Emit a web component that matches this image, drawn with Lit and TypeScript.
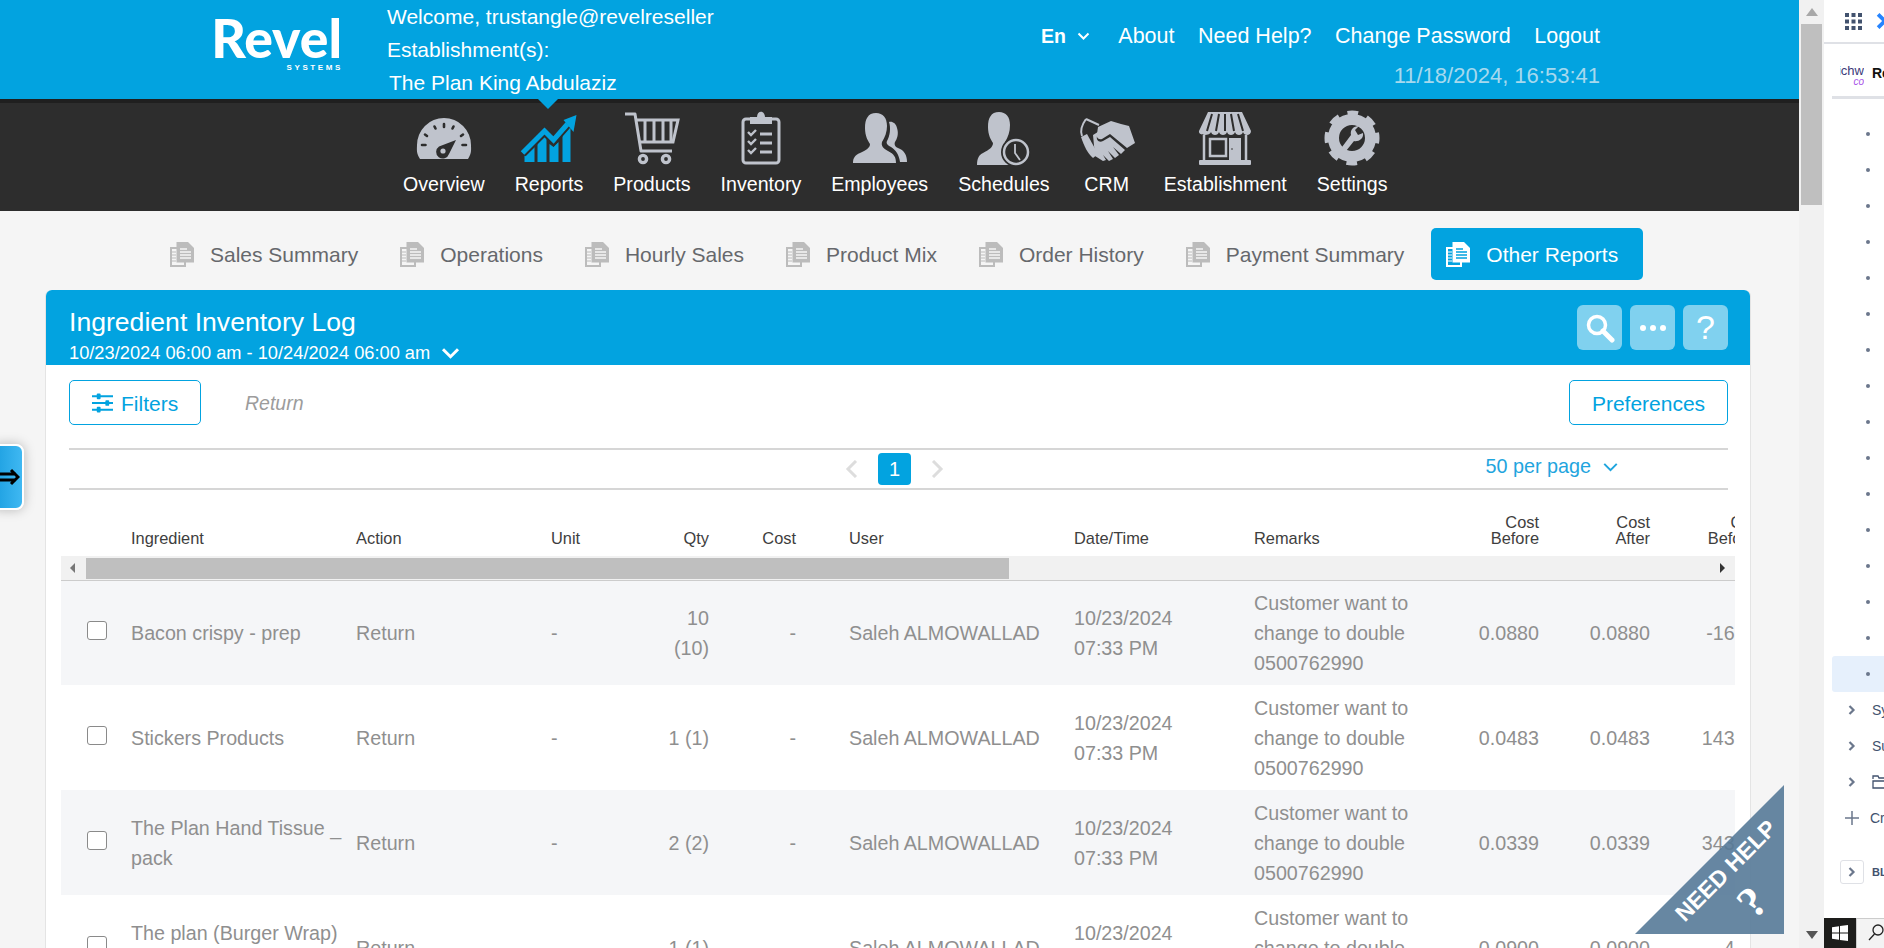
import { LitElement, html, css, svg } from "lit";
import { customElement } from "lit/decorators.js";

const navIcons: Record<string, unknown> = {
  overview: svg`<path class="g" d="M6 49C2 43 3 39 3 35A27 27 0 0 1 57 35C57 39 58 43 54 49Z"/>
    <path class="d" stroke-width="2.6" stroke-linecap="round" d="M11 24.500l2 1.500M20.500 16.500l1 2M30 14v3M39.500 16.500l-1 2M49 24.500l-2 1.500M8 35h3.500M48.500 35H52"/>
    <path class="df" d="M42 30L25 36.500A6.600 6.600 0 1 0 35 44Z"/><circle class="g" cx="29" cy="41" r="2.600"/>`,
  reports: svg`<g transform="translate(1.500 0)"><g class="b"><path d="M4 52V46L14 37V52Z"/><path d="M17 52V33L26 24V52Z"/><path d="M29 52V34L33 37L38 32V52Z"/><path d="M42 52V24L50 16V52Z"/></g>
    <path fill="none" stroke="#2d2d2d" stroke-width="9" d="M2 43L24 21L33 30L47 14"/>
    <path fill="none" stroke="#02a3e0" stroke-width="5" d="M2 43L24 21L33 30L47 14"/>
    <path class="b" d="M56 5L43 10L53 22Z"/></g>`,
  products: svg`<g class="o" stroke-width="3"><path d="M3 4H13L19 41H50" stroke-linejoin="round"/><path d="M14 10H56L51 32H18"/><path d="M23 11V31M32 11V31M41 11V31M49 11V31" stroke-width="3"/></g>
    <circle class="o" stroke-width="3.400" cx="21" cy="49" r="3.600"/><circle class="o" stroke-width="3.400" cx="44" cy="49" r="3.600"/>`,
  inventory: svg`<rect class="o" stroke-width="3" x="12" y="9" width="36" height="44" rx="3"/>
    <path class="g" d="M19 7H26C26 0 34 0 34 7H41V14H19Z"/>
    <g class="o" stroke-width="2.400"><path d="M17 22l3 3 5-5M17 31l3 3 5-5M17 40l3 3 5-5"/><path stroke-width="3" d="M29 24H41M29 33H41M29 42H41"/></g>`,
  employees: svg`<path class="g" d="M39 12C42 11 46 13 47 18C49 24 47 29 45 32C44 34 45 37 48 38C54 40 57 45 57 52L50 52C49 45 46 40 41 37C37 35 36 33 37 31C40 26 41 18 39 12Z"/>
    <path class="g" d="M26 3C18 3 15 9 15 18C15 26 18 31 20 34C20 38 16 40 10 43C5 45 3 48 3 53L46 53C46 47 44 44 38 41C33 38 31 36 32 32C35 27 37 22 37 16C37 8 33 3 26 3Z"/>`,
  schedules: svg`<path class="g" d="M25 2C17 2 14 8 14 17C14 25 17 30 19 33C19 37 15 40 9 43C5 45 3 48 3 55L44 55C44 47 43 44 37 41C32 38 30 36 31 32C34 27 36 22 36 15C36 7 32 2 25 2Z"/>
    <circle class="df" cx="42" cy="42" r="15"/><circle class="o" stroke-width="2.500" cx="42" cy="42" r="12"/>
    <path class="o" stroke-width="1.800" d="M41 34V43L46 50"/>`,
  crm: svg`<g class="g"><path d="M21 17L34 11L44 14L52 16L58 33L50 38L33 24L25 29C21 30 19 27 20 24Z"/><path d="M16 25L24 20L20 26C19 30 22 33 26 31L33 27L48 40L44 44L36 37L42 45L38 48L31 41L36 49L32 51L26 45L29 50L26 51L18 46Z"/><path d="M4 27L10 24L21 44L16 48C11 44 7 36 4 27Z"/></g>
    <path class="o" stroke-width="2" d="M9 9C4 16 3 21 5 26M9 9L22 15"/>`,
  establishment: svg`<path class="g" d="M13 2H47L56 21C56 26 49 26 48 22C47 26 41 26 40 22C39 26 33 26 32 22C31 26 25 26 24 22C23 26 17 26 16 22C15 26 3 26 4 21Z"/>
    <path class="dl" stroke-width="2" d="M17 4L12 21M24 4L21 21M30 4V21M36 4L39 21M43 4L48 21"/>
    <path class="o" stroke-width="2.500" d="M9 25V50M51 25V50"/>
    <rect class="o" stroke-width="2.500" x="15" y="29" width="16" height="17"/><rect class="g" x="34" y="28" width="12" height="22"/><circle class="df" cx="37" cy="39" r=".8"/>
    <rect class="g" x="4" y="50" width="52" height="5" rx="1"/>`,
  settings: svg`<circle class="o" stroke-width="5" stroke-dasharray="10.500 9.140" cx="30" cy="28" r="25" transform="rotate(-12 30 28)"/>
    <circle class="o" stroke-width="11" cx="30" cy="28" r="18.500"/>
    <path class="g" d="M20 37L29 25C28 20 31 16 37 16L33 20L36 25L41 23C42 29 36 32 32 31L24 41C22 42 19 40 20 37Z"/>`,
};

const nav = [
  ["Overview", "overview"], ["Reports", "reports"], ["Products", "products"], ["Inventory", "inventory"],
  ["Employees", "employees"], ["Schedules", "schedules"], ["CRM", "crm"], ["Establishment", "establishment"], ["Settings", "settings"],
];
const tabs = ["Sales Summary", "Operations", "Hourly Sales", "Product Mix", "Order History", "Payment Summary"];
const rows = [
  ["Bacon crispy - prep", "10 (10)", "0.0880", "0.0880", "-16.00"],
  ["Stickers Products", "1 (1)", "0.0483", "0.0483", "143.00"],
  ["The Plan Hand Tissue _ pack", "2 (2)", "0.0339", "0.0339", "343.00"],
  ["The plan (Burger Wrap) pack", "1 (1)", "0.0900", "0.0900", "4.00"],
];

const docIcon = html`<svg class="doc" viewBox="0 0 24 25" width="24" height="25" fill="none" stroke="currentColor">
  <path d="M7 6H1V24H15V20" stroke-width="2"/><path d="M2 10H6M2 13H6M2 16H6M2 19H6" stroke-width="1.200"/>
  <path d="M6.500 0H18L24 6V20.500H6.500Z" fill="currentColor" stroke="none"/>
  <path d="M10 7H17M10 10H21M10 13H21M10 16H21" stroke="var(--doc-line)" stroke-width="1.300"/></svg>`;

@customElement("app-root")
export class AppRoot extends LitElement {
  static styles = css`
    :host { display: block; position: relative; width: 1884px; height: 948px; overflow: hidden; font-family: "Liberation Sans", Arial, sans-serif; }
    .shell { display: flex; height: 948px; }
    .page { width: 1799px; flex: none; background: #f5f5f5; overflow: hidden; }

    .top { display: flex; height: 99px; background: #02a3e0; color: #fff; padding: 0 199px 0 214px; box-sizing: border-box; }
    .logo { width: 127px; display: flex; flex-direction: column; align-items: flex-end; padding-top: 15px; }
    .logo b { font: 900 53.500px/44px Lato, sans-serif; margin-right: -1px; }
    .logo span { font: 700 8px/10px "Liberation Sans", sans-serif; letter-spacing: 2.6px; margin-top: 4px; margin-right: -2px; }
    .who { margin-left: 46px; font-size: 21px; line-height: 33px; }
    .who .est { padding-left: 2px; }
    .meta { margin-left: auto; display: flex; flex-direction: column; align-items: flex-end; }
    .links { display: flex; align-items: center; gap: 23.500px; font-size: 21.500px; line-height: 26px; margin-top: 23px; }
    .lang { display: flex; align-items: center; gap: 11px; font-weight: 700; font-size: 19.500px; margin-right: 5px; }
    .clock { color: #a6d9ee; font-size: 22px; line-height: 26px; margin-top: 14px; }

    .nav { position: relative; height: 112px; box-sizing: border-box; background: #2d2d2d; border-top: 4px solid #1f1f1f; padding: 7px 0 0 403px; display: flex; gap: 30px; color: #fff; }
    .nav::before { content: ""; position: absolute; left: 538px; top: -4px; border: 10px solid transparent; border-top-color: #02a3e0; border-bottom-width: 0; }
    .item { display: flex; flex-direction: column; align-items: center; font-size: 19.600px; line-height: 24px; }
    .item svg { width: 60px; height: 56px; margin: 0 -3px 6px; }
    .g { fill: #bfc3cc; }
    .df { fill: #2d2d2d; }
    .b { fill: #02a3e0; }
    .o { fill: none; stroke: #bfc3cc; }
    .d { fill: none; stroke: #2d2d2d; }
    .dl { fill: none; stroke: #2d2d2d; }

    .tabs { display: flex; align-items: center; height: 79px; padding: 17px 0 10px 149px; box-sizing: border-box; color: #66686c; font-size: 21px; }
    .tab { display: flex; align-items: center; gap: 16px; height: 52px; padding: 0 21px; color: #66686c; --doc-line: #f5f5f5; }
    .tab span { padding-top: 1px; }
    .tab .doc { color: #bcbcbc; }
    .tab.on { margin-left: 6px; padding: 0 25px 0 15px; gap: 16px; background: #02a3e0; color: #fff; border-radius: 5px; --doc-line: #02a3e0; }
    .tab.on .doc { color: #fff; }

    .card { margin-left: 45px; width: 1706px; background: #fff; border: 1px solid #e4e4e4; border-width: 0 1px; border-radius: 6px 6px 0 0; box-sizing: border-box; }
    .ch { height: 75px; background: #02a3e0; color: #fff; border-radius: 6px 6px 0 0; padding: 0 22px 0 23px; display: flex; justify-content: space-between; }
    .title { font-size: 26.600px; line-height: 30px; margin-top: 17px; }
    .range { display: flex; align-items: center; gap: 11px; font-size: 18.250px; line-height: 20px; margin-top: 6px; }
    .acts { display: flex; gap: 8px; margin-top: 15px; }
    .act { width: 45px; height: 45px; border-radius: 6px; background: #80d1ef; display: flex; align-items: center; justify-content: center; font-size: 34px; }

    .tools { display: flex; align-items: center; padding: 15px 22px 0 23px; }
    .btn { height: 45px; box-sizing: border-box; border: 1px solid #02a3e0; border-radius: 5px; color: #02a3e0; display: flex; align-items: center; font-size: 21px; background: #fff; padding-top: 2px; }
    .btn svg { margin-top: -2px; }
    .btn.f { width: 132px; padding-left: 22px; gap: 8px; }
    .btn.p { width: 159px; justify-content: center; margin-left: auto; }
    .ret { margin-left: 44px; color: #9c9c9c; font-style: italic; font-size: 19.500px; padding-top: 1px; }

    .pager { position: relative; margin: 23px 22px 0 23px; height: 42px; box-sizing: border-box; border: solid #d6d6d6; border-width: 2px 0; display: flex; align-items: center; padding-left: 776px; gap: 20px; }
    .pg { width: 33px; height: 32px; background: #02a3e0; color: #fff; border-radius: 4px; font-size: 20px; display: flex; align-items: center; justify-content: center; }
    .per { margin-left: auto; margin-right: 110px; display: flex; align-items: center; gap: 12px; color: #1fa5de; font-size: 19.800px; padding-bottom: 5px; }

    .scroll { margin: 24px 15px 0; width: 1674px; overflow: hidden; }
    .row { display: grid; grid-template-columns: 70px 225px 195px 108px 50px 140px 225px 180px 166px 119px 111px 112px; width: 1701px; align-items: center; }
    .row > div { min-width: 0; }
    .r { text-align: right; }
    .costc { padding-right: 53px; }
    .head { align-items: end; color: #3e3e3e; font-size: 16.400px; line-height: 16px; padding-bottom: 10px; }
    .head > .last { padding-right: 6px; }
    .hb { height: 25px; box-sizing: border-box; background: #f1f1f1; border-bottom: 1px solid #ccc; display: flex; align-items: center; position: relative; z-index: 1; padding-left: 25px; padding-right: 10px; }
    .thumb { width: 923px; height: 21px; background: #bfbfbf; }
    .al { position: absolute; left: 9px; top: 7px; border: 5px solid transparent; border-right: 5px solid #777; border-left-width: 0; }
    .ar { margin-left: auto; border: 5px solid transparent; border-left: 5px solid #333; border-right-width: 0; }
    .body { margin-top: -1px; }
    .data { height: 105px; color: #8f8f8f; font-size: 19.700px; line-height: 30px; }
    .body > .data:nth-child(odd) { background: #f5f6f8; }
    .ing { padding-right: 8px; }
    .check { width: 20px; height: 19px; border: 1.500px solid #8a8a8a; border-radius: 3px; box-sizing: border-box; margin: 0 0 5px 26px; background: #fff; }

    .vbar { width: 25px; flex: none; background: #f1f1f1; position: relative; display: flex; flex-direction: column; align-items: center; }
    .up { margin-top: 8px; border: 8px solid transparent; border-bottom-color: #a8a8a8; border-top-width: 0; border-left-width: 6px; border-right-width: 6px; }
    .vthumb { width: 21px; height: 181px; background: #bfbfbf; margin-top: 8px; }
    .dn { margin-top: auto; margin-bottom: 9px; border: 8px solid transparent; border-top-color: #555; border-bottom-width: 0; border-left-width: 6px; border-right-width: 6px; }

    .side { flex: 1; min-width: 0; background: #fff; display: flex; flex-direction: column; overflow: hidden; color: #42526e; font-size: 14px; }
    .bar { height: 44px; flex: none; box-sizing: border-box; border-bottom: 2px solid #dfe1e6; display: flex; align-items: center; padding: 0 0 0 21px; gap: 14px; }
    .bar svg { flex: none; }
    .brand { height: 55px; flex: none; box-sizing: border-box; margin-left: 8px; border-bottom: 3px solid #dfe1e6; display: flex; align-items: center; padding-left: 8px; gap: 8px; }
    .mark { flex: none; display: flex; flex-direction: column; align-items: flex-end; width: 24px; overflow: hidden; color: #3b3a78; font-size: 13px; line-height: 13px; padding-top: 10px; }
    .mark i { color: #a855e8; font-size: 10px; line-height: 10px; }
    .brand b { color: #111; font-size: 14px; padding-top: 6px; }
    .list { margin-top: 17px; }
    .li { height: 36px; display: flex; align-items: center; padding-left: 23px; gap: 15px; white-space: nowrap; color: #42526e; }
    .li svg { flex: none; }
    .dot { width: 4px; height: 4px; border-radius: 50%; background: #6b778c; margin-left: 19px; }
    .li.sel { margin-left: 8px; padding-left: 15px; background: #e6f0fc; border-radius: 3px 0 0 3px; }
    .li.add { padding-left: 21px; gap: 11px; }
    .li.bl { margin-top: 18px; padding-left: 16px; gap: 8px; font-size: 11px; font-weight: 700; }
    .box { flex: none; width: 24px; height: 24px; box-sizing: border-box; border: 1px solid #dfe1e6; border-radius: 3px; display: flex; align-items: center; justify-content: center; }
    .task { margin-top: auto; height: 30px; flex: none; display: flex; background: #f3f3f3; }
    .start { width: 36px; background: #1d1d1b; display: flex; align-items: center; justify-content: center; }
    .search { flex: 1; border-top: 1px solid #ccc; border-left: 1px solid #ccc; padding: 5px 0 0 11px; }

    .help { position: absolute; left: 1635px; top: 785px; width: 149px; height: 149px; background: rgba(87, 122, 152, .9); clip-path: polygon(100% 0, 100% 100%, 0 100%); color: #fff; font-weight: 700; }
    .help span { position: absolute; white-space: nowrap; transform: translate(-50%, -50%) rotate(-45deg); }
    .help .t { left: 91px; top: 86px; font-size: 23px; }
    .help .q { left: 117px; top: 117px; font-size: 44px; font-family: "Liberation Serif", serif; }

    .drawer { position: absolute; left: -8px; top: 444px; width: 32px; height: 66px; box-sizing: border-box; border: 2px solid #fff; border-radius: 8px; background: linear-gradient(90deg, #1c9fe0, #3fb8f2); box-shadow: 0 0 12px rgba(0,0,0,.25); display: flex; align-items: center; justify-content: flex-end; padding-right: 2px; }
  `;

  private chev(w: number, h: number, color = "currentColor", sw = 2) {
    return html`<svg width=${w} height=${h} viewBox="0 0 12 8" fill="none" stroke=${color} stroke-width=${sw}><path d="M1 1.500L6 6.500L11 1.500"/></svg>`;
  }

  render() {
    const cv = svg`<path d="M2.500 1L6.500 5L2.500 9" fill="none" stroke="#6b778c" stroke-width="2.200"/>`;
    return html`
      <div class="shell">
        <div class="page">
          <div class="top">
            <div class="logo"><b>Revel</b><span>SYSTEMS</span></div>
            <div class="who"><div>Welcome, trustangle@revelreseller</div><div>Establishment(s):</div><div class="est">The Plan King Abdulaziz</div></div>
            <div class="meta">
              <div class="links">
                <div class="lang">En ${this.chev(13, 8)}</div>
                <div>About</div><div>Need Help?</div><div>Change Password</div><div>Logout</div>
              </div>
              <div class="clock">11/18/2024, 16:53:41</div>
            </div>
          </div>
          <div class="nav">
            ${nav.map(([l, k]) => html`<div class="item"><svg viewBox="0 0 60 56">${navIcons[k]}</svg><div>${l}</div></div>`)}
          </div>
          <div class="tabs">
            ${tabs.map((t) => html`<div class="tab">${docIcon}<span>${t}</span></div>`)}
            <div class="tab on">${docIcon}<span>Other Reports</span></div>
          </div>
          <div class="card">
            <div class="ch">
              <div>
                <div class="title">Ingredient Inventory Log</div>
                <div class="range">10/23/2024 06:00 am - 10/24/2024 06:00 am ${this.chev(19, 12)}</div>
              </div>
              <div class="acts">
                <div class="act"><svg width="30" height="30" viewBox="0 0 30 30" fill="none" stroke="#fff"><circle cx="12" cy="12" r="8.500" stroke-width="3.500"/><path d="M18 18L27 27" stroke-width="5" stroke-linecap="round"/></svg></div>
                <div class="act"><svg width="30" height="8" viewBox="0 0 30 8" fill="#fff"><circle cx="5" cy="4" r="3"/><circle cx="15" cy="4" r="3"/><circle cx="25" cy="4" r="3"/></svg></div>
                <div class="act">?</div>
              </div>
            </div>
            <div class="tools">
              <div class="btn f"><svg width="21" height="20" viewBox="0 0 22 20" fill="#02a3e0"><path d="M0 2h22v2H0zM0 9h22v2H0zM0 16h22v2H0z"/><rect x="5" y="0" width="4" height="6" rx="1"/><rect x="14" y="7" width="4" height="6" rx="1"/><rect x="5" y="14" width="4" height="6" rx="1"/></svg>Filters</div>
              <div class="ret">Return</div>
              <div class="btn p">Preferences</div>
            </div>
            <div class="pager">
              <svg width="13" height="18" viewBox="0 0 13 18" fill="none" stroke="#ddd" stroke-width="3"><path d="M11 1L3 9L11 17"/></svg>
              <div class="pg">1</div>
              <svg width="13" height="18" viewBox="0 0 13 18" fill="none" stroke="#ddd" stroke-width="3"><path d="M2 1L10 9L2 17"/></svg>
              <div class="per">50 per page ${this.chev(15, 10, "#1fa5de", 1.6)}</div>
            </div>
            <div class="scroll">
              <div class="row head">
                <div></div><div>Ingredient</div><div>Action</div><div>Unit</div><div class="r">Qty</div><div class="r costc">Cost</div>
                <div>User</div><div>Date/Time</div><div>Remarks</div><div class="r">Cost<br />Before</div><div class="r">Cost<br />After</div><div class="r last">Qty<br />Before</div>
              </div>
              <div class="hb"><div class="al"></div><div class="thumb"></div><div class="ar"></div></div>
              <div class="body">
                ${rows.map((r) => html`<div class="row data">
                  <div><div class="check"></div></div><div class="ing">${r[0]}</div><div>Return</div><div>-</div><div class="r">${r[1]}</div><div class="r costc">-</div>
                  <div>Saleh ALMOWALLAD</div><div>10/23/2024<br />07:33 PM</div><div>Customer want to change to double 0500762990</div>
                  <div class="r">${r[2]}</div><div class="r">${r[3]}</div><div class="r">${r[4]}</div>
                </div>`)}
              </div>
            </div>
          </div>
        </div>
        <div class="vbar"><div class="up"></div><div class="vthumb"></div><div class="dn"></div></div>
        <div class="side">
          <div class="bar">
            <svg width="17" height="17" viewBox="0 0 17 17" fill="#42526e"><path d="M0 0h4v4H0zM6.500 0h4v4h-4zM13 0h4v4h-4zM0 6.500h4v4H0zM6.500 6.500h4v4h-4zM13 6.500h4v4h-4zM0 13h4v4H0zM6.500 13h4v4h-4zM13 13h4v4h-4z"/></svg>
            <svg width="14" height="16" viewBox="0 0 14 18" fill="#2684ff"><path d="M0 3L3 0L12 9L3 18L0 15L6 9Z"/></svg>
          </div>
          <div class="brand"><div class="mark"><span>ichw</span><i>co</i></div><b>Re</b></div>
          <div class="list">
            ${Array.from({ length: 15 }, () => html`<div class="li"><span class="dot"></span></div>`)}
            <div class="li sel"><span class="dot"></span></div>
            <div class="li"><svg width="10" height="10" viewBox="0 0 10 10">${cv}</svg><span>Sy</span></div>
            <div class="li"><svg width="10" height="10" viewBox="0 0 10 10">${cv}</svg><span>Su</span></div>
            <div class="li"><svg width="10" height="10" viewBox="0 0 10 10">${cv}</svg><svg width="16" height="14" viewBox="0 0 16 14" fill="none" stroke="#42526e" stroke-width="1.300"><path d="M1 4V1H6L7 3H15V13H1V6H15"/></svg></div>
            <div class="li add"><svg width="14" height="14" viewBox="0 0 14 14" stroke="#6b778c" stroke-width="1.500"><path d="M7 0V14M0 7H14"/></svg><span>Cr</span></div>
            <div class="li bl"><div class="box"><svg width="10" height="10" viewBox="0 0 10 10">${cv}</svg></div><span>BL</span></div>
          </div>
          <div class="task">
            <div class="start"><svg width="16" height="16" viewBox="0 0 16 16" fill="#fff"><path d="M0 2.200L7 1.200V7.500H0zM8 1L16 0V7.500H8zM0 8.500H7V14.800L0 13.800zM8 8.500H16V16L8 15Z"/></svg></div>
            <div class="search"><svg width="16" height="18" viewBox="0 0 16 18" fill="none" stroke="#222" stroke-width="1.300"><circle cx="10" cy="6" r="5"/><path d="M6.500 10L1 16"/></svg></div>
          </div>
        </div>
      </div>
      <div class="drawer"><svg width="20" height="18" viewBox="0 0 20 18" fill="none" stroke="#000" stroke-width="3"><path d="M0 6H16M0 12H16M11 2L18 9L11 16"/></svg></div>
      <div class="help"><span class="t">NEED HELP</span><span class="q">?</span></div>
    `;
  }
}
